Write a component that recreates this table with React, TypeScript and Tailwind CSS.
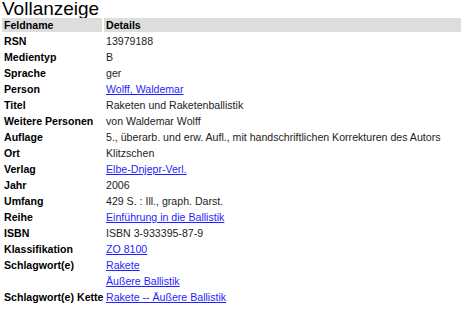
const rows: { label: string; value: string; link?: boolean }[] = [
  { label: "RSN", value: "13979188" },
  { label: "Medientyp", value: "B" },
  { label: "Sprache", value: "ger" },
  { label: "Person", value: "Wolff, Waldemar", link: true },
  { label: "Titel", value: "Raketen und Raketenballistik" },
  { label: "Weitere Personen", value: "von Waldemar Wolff" },
  {
    label: "Auflage",
    value: "5., überarb. und erw. Aufl., mit handschriftlichen Korrekturen des Autors",
  },
  { label: "Ort", value: "Klitzschen" },
  { label: "Verlag", value: "Elbe-Dnjepr-Verl.", link: true },
  { label: "Jahr", value: "2006" },
  { label: "Umfang", value: "429 S. : Ill., graph. Darst." },
  { label: "Reihe", value: "Einführung in die Ballistik", link: true },
  { label: "ISBN", value: "ISBN 3-933395-87-9" },
  { label: "Klassifikation", value: "ZO 8100", link: true },
  { label: "Schlagwort(e)", value: "Rakete", link: true },
  { label: "", value: "Äußere Ballistik", link: true },
  { label: "Schlagwort(e) Kette", value: "Rakete -- Äußere Ballistik", link: true },
];

export default function App() {
  return (
    <div className="min-h-[310px] w-[463px] bg-white font-['Liberation_Sans',Arial,sans-serif] text-black">
      <h1 className="h-[18px] pl-[2px] text-[19px] leading-[18px] font-normal">Vollanzeige</h1>

      <div className="grid grid-cols-[100px_1fr] gap-[2px] px-[2px] text-[10.6px] leading-[14px]">
        {/* header row */}
        <div className="h-[14px] bg-[#dddddd] px-[2px] font-bold">Feldname</div>
        <div className="h-[14px] bg-[#dddddd] px-[2px] font-bold">Details</div>

        {rows.map((row, i) => (
          <div key={i} className="contents">
            <div className="h-[14px] whitespace-nowrap px-[2px] font-bold">{row.label}</div>
            <div className="h-[14px] whitespace-nowrap px-[2px] text-[#222]">
              {row.link ? (
                <a href="#" className="text-[#1f1fff] underline">
                  {row.value}
                </a>
              ) : (
                row.value
              )}
            </div>
          </div>
        ))}
      </div>
    </div>
  );
}
